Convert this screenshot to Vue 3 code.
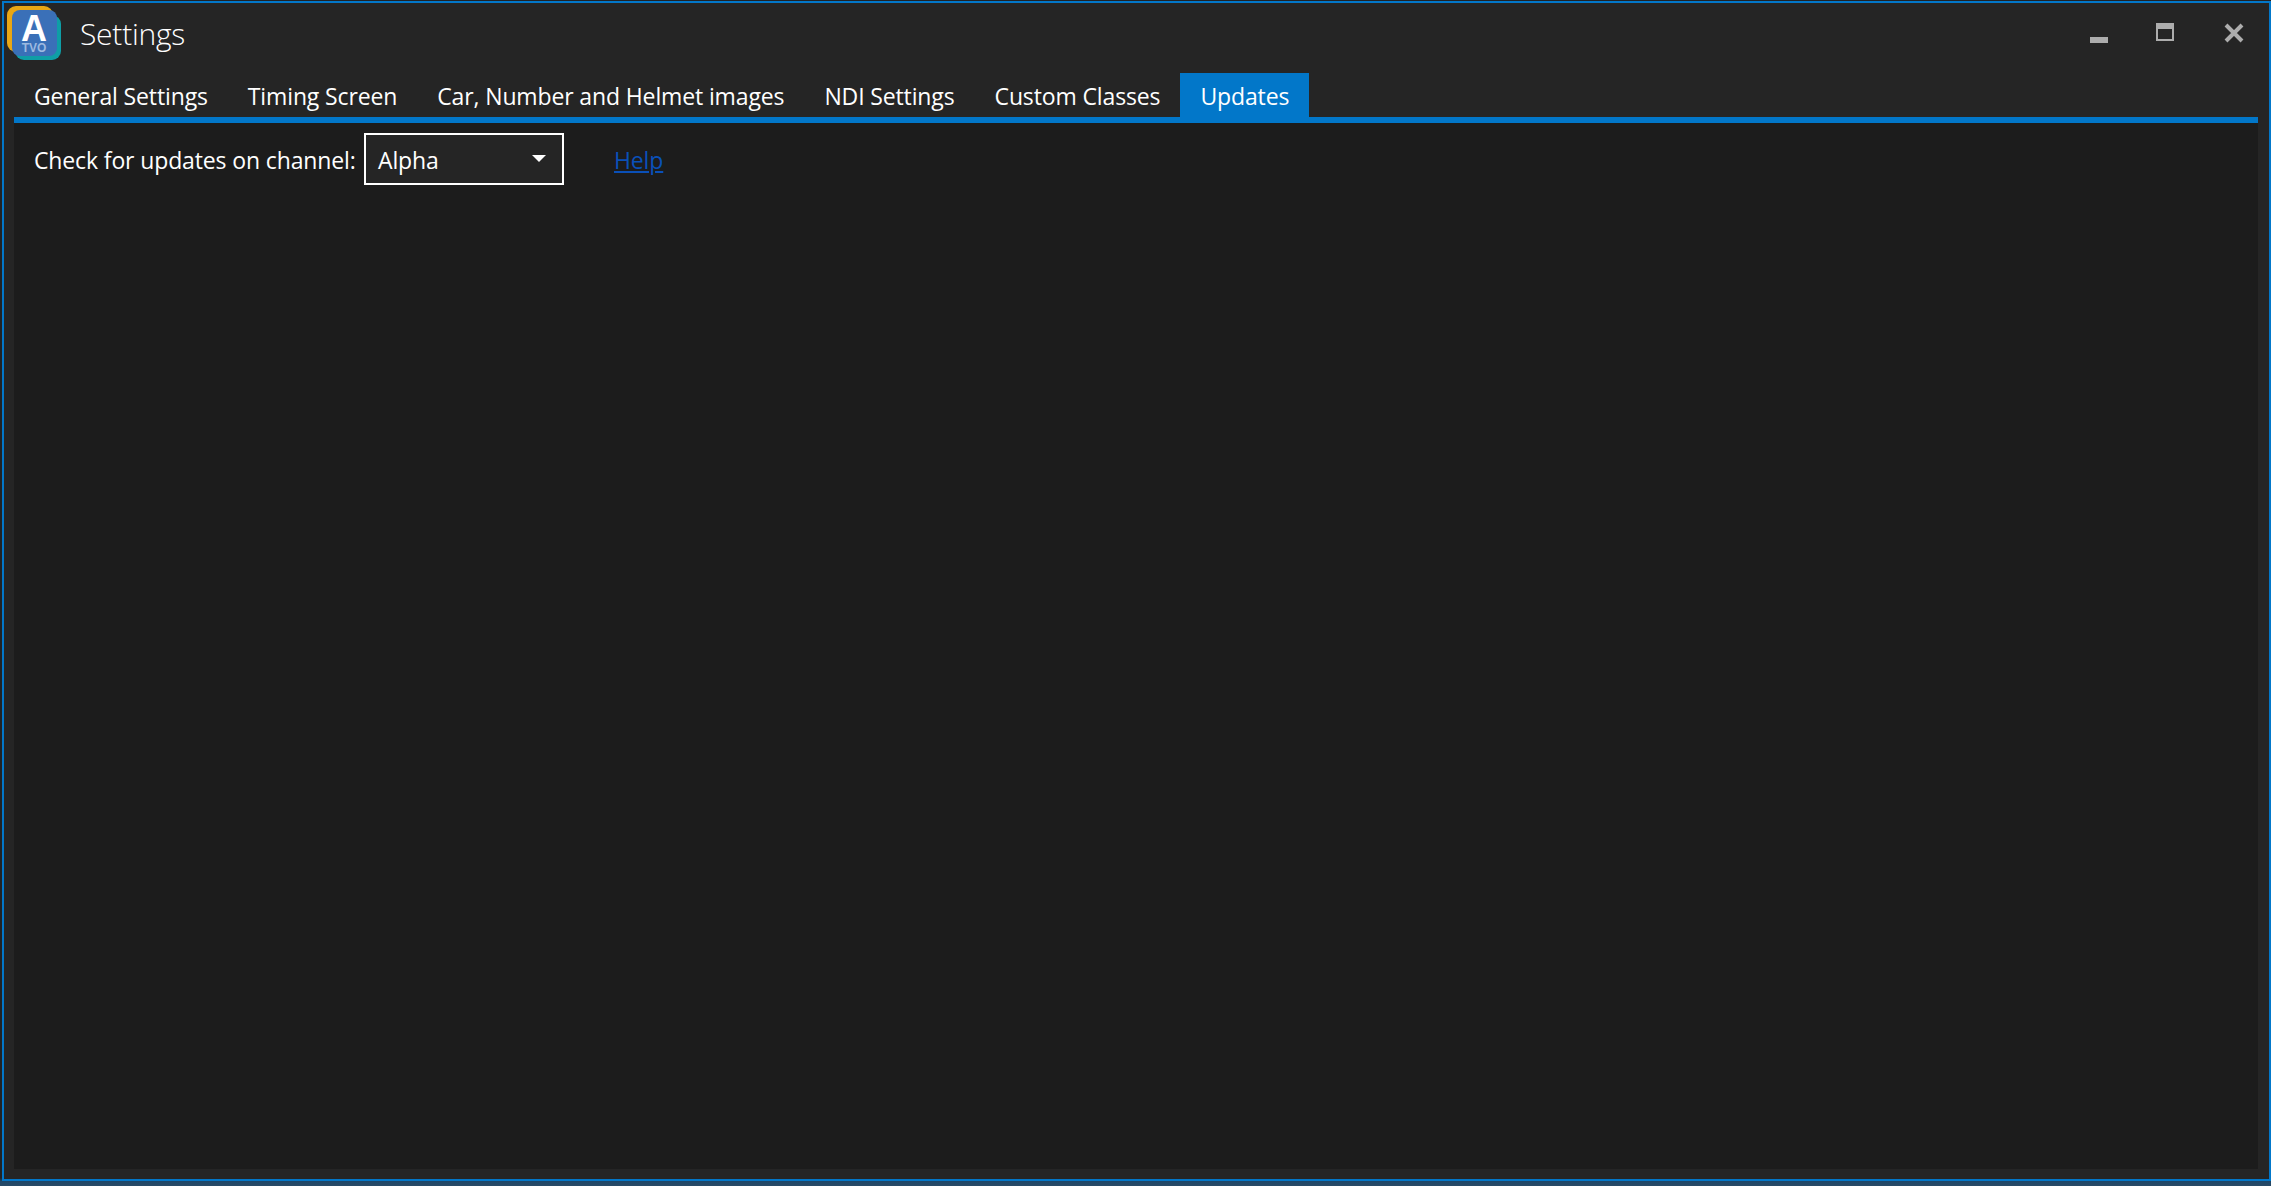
<template>
  <div class="screen">
    <div class="window">
      <header class="titlebar">
        <svg class="logo" width="54" height="54" viewBox="0 0 54 54" aria-hidden="true">
          <rect x="0" y="0" width="46" height="46" rx="9" fill="#e9a713" />
          <rect x="8" y="9" width="46" height="45" rx="9" fill="#0f9ea6" />
          <rect x="5" y="4" width="45" height="46" rx="8" fill="#3a70b8" />
          <text x="27" y="35" class="logo-a">A</text>
          <text x="27" y="46" class="logo-sub">TVO</text>
        </svg>
        <h1 class="title">Settings</h1>
        <div class="controls">
          <svg width="18" height="18" viewBox="0 0 18 18" aria-hidden="true"><rect x="0" y="14" width="18" height="6" fill="#adadad" /></svg>
          <svg class="max" width="18" height="18" viewBox="0 0 18 18" aria-hidden="true"><path d="M0 0h18v18H0zM2 6v10h14V6z" fill="#adadad" fill-rule="evenodd" /></svg>
          <svg width="20" height="20" viewBox="0 0 20 20" aria-hidden="true"><path d="M2 2l16 16M18 2L2 18" stroke="#adadad" stroke-width="4" fill="none" /></svg>
        </div>
      </header>
      <nav class="tabs">
        <div v-for="t in tabs" :key="t" class="tab" :class="{ active: t === 'Updates' }">{{ t }}</div>
      </nav>
      <main class="panel">
        <div class="row">
          <span class="label">Check for updates on channel:</span>
          <div class="combo">
            <span class="combo-text">Alpha</span>
            <svg width="14" height="7" viewBox="0 0 14 7" aria-hidden="true"><path d="M0 0h14L7 7z" fill="#fff" /></svg>
          </div>
          <a class="help">Help</a>
        </div>
      </main>
    </div>
  </div>
</template>

<script setup>
const tabs = ['General Settings', 'Timing Screen', 'Car, Number and Helmet images', 'NDI Settings', 'Custom Classes', 'Updates']
</script>

<style>
html, body { margin: 0; background: #1f2a33; }
</style>

<style scoped>
.screen {
  width: 2271px;
  height: 1186px;
  box-sizing: border-box;
  padding: 1px 0 5px 2px;
  background: linear-gradient(#222, #222 1178px, #1c4668 1181px, #2a4a66);
  font-family: "Open Sans", "Noto Sans", sans-serif;
  color: #fff;
  font-size: 23px;
  letter-spacing: -0.13px;
}
.window {
  width: 2269px;
  height: 1180px;
  box-sizing: border-box;
  border: 2px solid #0277c9;
  background: #252525;
  display: flex;
  flex-direction: column;
  padding: 0 11px 10px 10px;
}
.titlebar {
  height: 70px;
  display: flex;
  align-items: flex-start;
  margin-left: -7px;
  margin-right: -11px;
}
.logo { margin: 3px 0 0 0; flex: none; }
.logo-a { font: 700 36px "Liberation Sans", sans-serif; fill: #fff; text-anchor: middle; }
.logo-sub { font: 700 12px "Liberation Sans", sans-serif; fill: #9dbae0; text-anchor: middle; }
.title {
  margin: 11px 0 0 19px;
  font-weight: 300;
  font-size: 30px;
  line-height: 40px;
  letter-spacing: -0.25px;
}
.controls {
  margin-left: auto;
  margin-right: 25px;
  margin-top: 20px;
  display: flex;
  gap: 50px;
}
.controls svg { overflow: visible; display: block; }
.controls .max { margin-left: -2px; }
.tabs {
  display: flex;
  height: 44px;
  align-items: stretch;
  border-bottom: 6px solid #0277c9;
}
.tab {
  padding: 0 20px;
  height: 44px;
  line-height: 46px;
  white-space: nowrap;
}
.tab.active { background: #0277c9; }
.panel {
  flex: 1;
  background: #1c1c1c;
  padding: 10px 0 0 20px;
}
.row { display: flex; align-items: center; }
.label { width: 330px; white-space: nowrap; padding-top: 2px; }
.combo {
  width: 200px;
  height: 52px;
  box-sizing: border-box;
  border: 2px solid #fff;
  background: #252525;
  display: flex;
  align-items: center;
  justify-content: space-between;
  padding: 0 16px 0 12px;
}
.combo-text { padding-top: 2px; }
.combo svg { margin-bottom: 2px; }
.help {
  margin-left: 50px;
  color: #0a50b8;
  text-decoration: underline;
  padding-top: 2px;
}
</style>
